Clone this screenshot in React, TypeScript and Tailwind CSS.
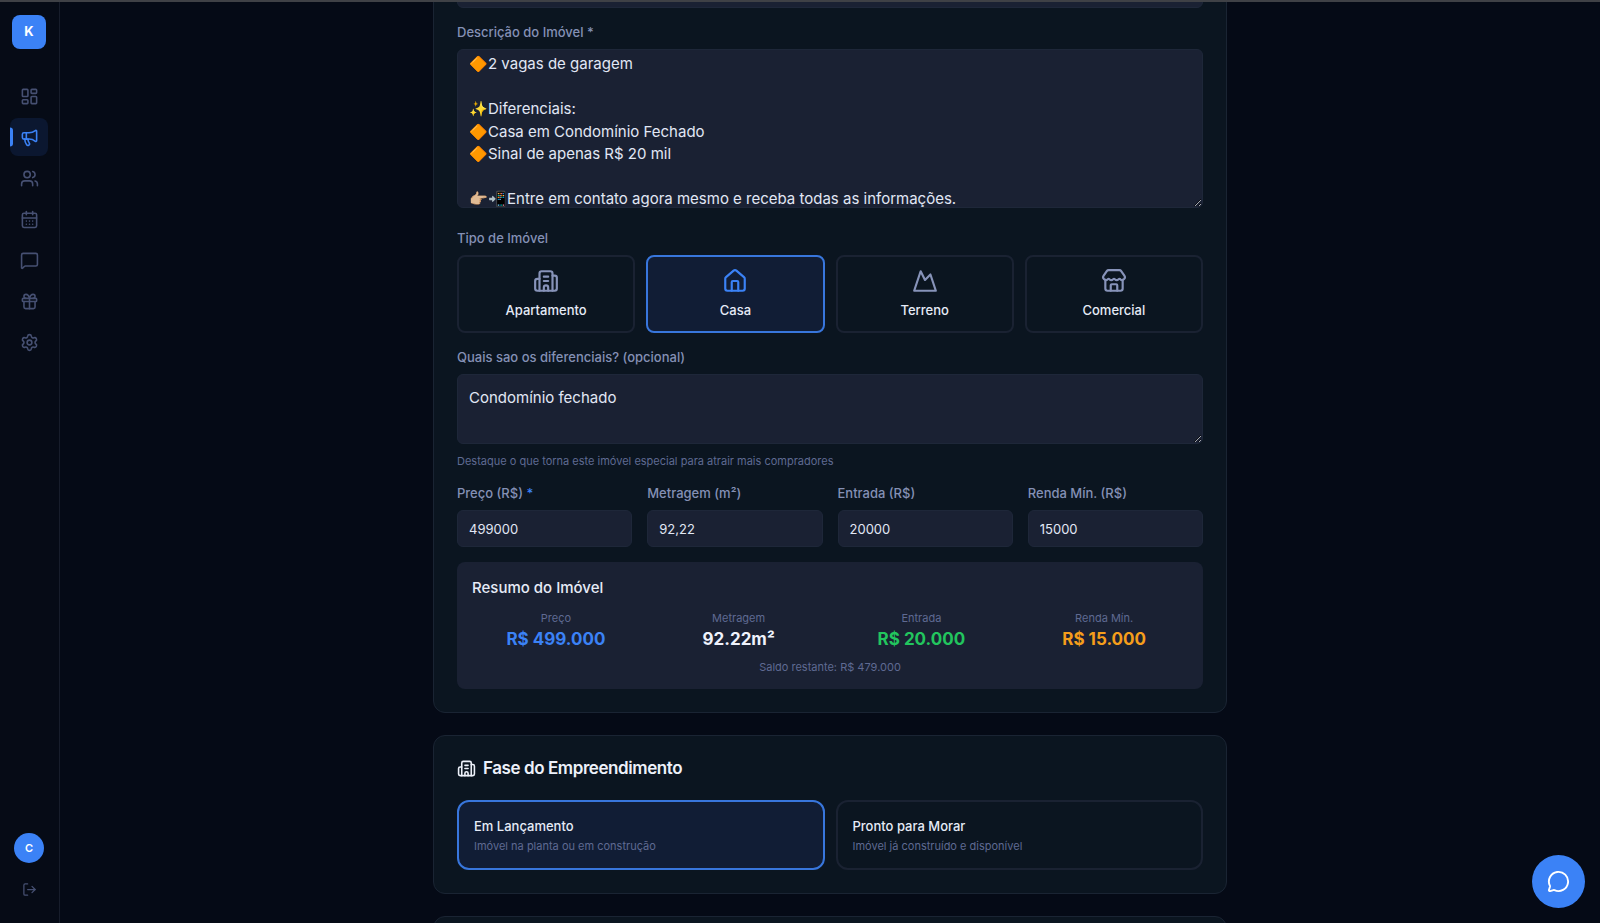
import { useState } from "react";
import {
  Building2,
  CalendarDays,
  Gift,
  House,
  LayoutDashboard,
  LogOut,
  Megaphone,
  MessageCircle,
  MessageSquare,
  Mountain,
  Settings,
  Store,
  Users,
} from "lucide-react";

const NAV_ITEMS = [
  { label: "Painel", icon: LayoutDashboard },
  { label: "Campanhas", icon: Megaphone },
  { label: "Leads", icon: Users },
  { label: "Agenda", icon: CalendarDays },
  { label: "Mensagens", icon: MessageSquare },
  { label: "Indicações", icon: Gift },
  { label: "Configurações", icon: Settings },
];

const PROPERTY_TYPES = [
  { value: "Apartamento", icon: Building2 },
  { value: "Casa", icon: House },
  { value: "Terreno", icon: Mountain },
  { value: "Comercial", icon: Store },
];

const NUMBER_FIELDS = [
  { id: "preco", label: "Preço (R$)", value: "499000", required: true },
  { id: "metragem", label: "Metragem (m²)", value: "92,22" },
  { id: "entrada", label: "Entrada (R$)", value: "20000" },
  { id: "renda", label: "Renda Mín. (R$)", value: "15000" },
];

const SUMMARY = [
  { label: "Preço", value: "R$ 499.000", color: "text-[#3b82f6]" },
  { label: "Metragem", value: "92.22m²", color: "text-[#eef2fc]" },
  { label: "Entrada", value: "R$ 20.000", color: "text-[#22c55e]" },
  { label: "Renda Mín.", value: "R$ 15.000", color: "text-[#f59e1b]" },
];

const PHASES = [
  { value: "Em Lançamento", description: "Imóvel na planta ou em construção" },
  { value: "Pronto para Morar", description: "Imóvel já construído e disponível" },
];

const DESCRIPTION = `🔶2 vagas de garagem

✨Diferenciais:
🔶Casa em Condomínio Fechado
🔶Sinal de apenas R$ 20 mil

👉🏼📲Entre em contato agora mesmo e receba todas as informações.`;

const labelClass = "block mb-2 text-[13px] leading-[18px] font-medium text-[#8490b5]";
const fieldClass = "block w-full rounded-md border border-[#1e2739] bg-[#1a2133] px-[11px] text-[#e1e7f5] outline-none";
const cardClass = "rounded-xl border border-[#1a2433] bg-[#0b1520] p-[23px]";

function Sidebar() {
  const [active, setActive] = useState("Campanhas");

  return (
    <aside className="flex w-[60px] shrink-0 flex-col items-center border-r border-[#171d2b] bg-[#060b16] pt-[15px] pr-px pb-[26px]">
      <div className="flex size-[34px] items-center justify-center rounded-lg bg-[#3b82f6] text-[13px] font-bold text-white">K</div>
      <nav className="mt-7 flex flex-col gap-[3px]">
        {NAV_ITEMS.map(({ label, icon: Icon }) => {
          const isActive = label === active;
          return (
            <button
              key={label}
              type="button"
              aria-label={label}
              onClick={() => setActive(label)}
              className={`relative flex size-[38px] cursor-pointer items-center justify-center rounded-lg ${
                isActive ? "bg-[#0b1730] text-[#3b82f6]" : "text-[#465072]"
              }`}
            >
              {isActive && <span className="absolute top-1/2 left-0 h-[19px] w-[3px] -translate-y-1/2 rounded-r-full bg-[#3b82f6]" />}
              <Icon size={19} strokeWidth={2} />
            </button>
          );
        })}
      </nav>
      <div className="mt-auto flex size-[30px] items-center justify-center rounded-full bg-[#3b82f6] text-[11px] font-semibold text-white">C</div>
      <button type="button" aria-label="Sair" className="mt-[19px] cursor-pointer text-[#465072]">
        <LogOut size={15} />
      </button>
    </aside>
  );
}

function PropertyCard() {
  const [type, setType] = useState("Casa");

  return (
    <section className={`${cardClass} -mt-[53px] flex flex-col gap-[15px]`}>
      <input aria-label="Título do Imóvel" className={`${fieldClass} h-[37px] shrink-0 text-[13px]`} />

      <div className="pb-1.5">
        <label htmlFor="descricao" className={labelClass}>Descrição do Imóvel *</label>
        <textarea
          id="descricao"
          defaultValue={DESCRIPTION}
          className={`${fieldClass} h-[159px] resize-y overflow-hidden pt-[3px] text-[15px] leading-normal`}
        />
      </div>

      <div role="group" aria-labelledby="tipo-label">
        <span id="tipo-label" className={labelClass}>Tipo de Imóvel</span>
        <div className="grid grid-cols-4 gap-[11px]">
          {PROPERTY_TYPES.map(({ value, icon: Icon }) => {
            const isSelected = value === type;
            return (
              <button
                key={value}
                type="button"
                aria-pressed={isSelected}
                onClick={() => setType(value)}
                className={`flex cursor-pointer flex-col items-center gap-[7px] rounded-lg border-2 pt-[11px] pb-3 ${
                  isSelected ? "border-[#3876dc] bg-[#111d35]" : "border-[#1a2232]"
                }`}
              >
                <Icon size={26} className={isSelected ? "text-[#3b82f6]" : "text-[#8793b9]"} />
                <span className="text-[13px] leading-[18px] font-medium text-[#e6ebf7]">{value}</span>
              </button>
            );
          })}
        </div>
      </div>

      <div>
        <label htmlFor="diferenciais" className={labelClass}>Quais sao os diferenciais? (opcional)</label>
        <textarea
          id="diferenciais"
          defaultValue="Condomínio fechado"
          className={`${fieldClass} h-[70px] resize-y py-3 text-[15px] leading-normal`}
        />
        <p className="mt-[9px] text-[11px] leading-4 text-[#5f6a92]">Destaque o que torna este imóvel especial para atrair mais compradores</p>
      </div>

      <div className="grid grid-cols-4 gap-[15px]">
        {NUMBER_FIELDS.map((field) => (
          <div key={field.id}>
            <label htmlFor={field.id} className={labelClass}>
              {field.label}
              {field.required && <span className="text-[#3b82f6]"> *</span>}
            </label>
            <input id={field.id} defaultValue={field.value} className={`${fieldClass} h-[37px] text-[13px]`} />
          </div>
        ))}
      </div>

      <div className="rounded-lg bg-[#1a2133] px-[15px] pt-[15px] pb-3.5">
        <h4 className="text-[15px] leading-[22px] font-medium text-[#e6ebf7]">Resumo do Imóvel</h4>
        <div className="mt-[11px] grid grid-cols-4 gap-[15px] text-center">
          {SUMMARY.map((item) => (
            <div key={item.label}>
              <p className="text-[11px] leading-4 text-[#5f6a92]">{item.label}</p>
              <p className={`text-[17px] leading-[26px] font-bold ${item.color}`}>{item.value}</p>
            </div>
          ))}
        </div>
        <p className="mt-[7px] text-center text-[11px] leading-4 text-[#5f6a92]">Saldo restante: R$ 479.000</p>
      </div>
    </section>
  );
}

function PhaseCard() {
  const [phase, setPhase] = useState("Em Lançamento");

  return (
    <section className={cardClass}>
      <h3 className="flex items-center gap-[7px] text-[17px] leading-[18px] font-semibold tracking-tight text-[#edf1fa]">
        <Building2 size={19} className="-my-1" />
        Fase do Empreendimento
      </h3>
      <div className="mt-[23px] grid grid-cols-2 gap-[11px]">
        {PHASES.map(({ value, description }) => (
          <button
            key={value}
            type="button"
            aria-pressed={value === phase}
            onClick={() => setPhase(value)}
            className={`cursor-pointer rounded-xl border-2 px-[15px] pt-[15px] pb-3.5 text-left ${
              value === phase ? "border-[#3876dc] bg-[#111d35]" : "border-[#1a2232]"
            }`}
          >
            <span className="block text-[13px] leading-[18px] font-medium text-[#e6ebf7]">{value}</span>
            <span className="mt-[3px] block text-[11px] leading-4 text-[#5f6a92]">{description}</span>
          </button>
        ))}
      </div>
    </section>
  );
}

export default function App() {
  return (
    <div className="flex h-screen overflow-hidden bg-[#050a16] font-['Inter',sans-serif]">
      <div className="fixed inset-x-0 top-0 z-20 h-0.5 bg-[#3f4146]" />
      <Sidebar />
      <main className="flex-1 overflow-hidden">
        <div className="mx-auto flex max-w-[794px] flex-col gap-[22px]">
          <PropertyCard />
          <PhaseCard />
          <section className={cardClass} />
        </div>
      </main>
      <button
        type="button"
        aria-label="Abrir chat"
        className="fixed right-[15px] bottom-[15px] flex size-[53px] cursor-pointer items-center justify-center rounded-full bg-[#3b82f6] text-white"
      >
        <MessageCircle size={23} />
      </button>
    </div>
  );
}
